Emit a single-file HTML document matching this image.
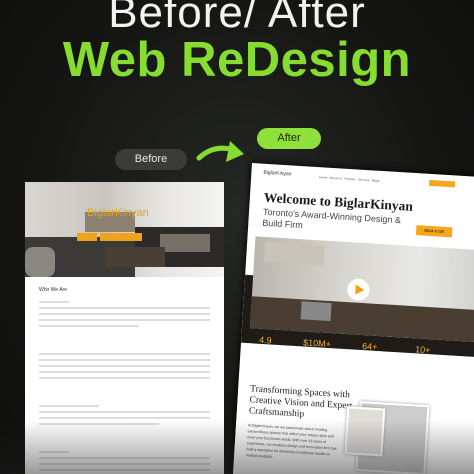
<!DOCTYPE html>
<html><head><style>
*{margin:0;padding:0;box-sizing:border-box}
html,body{width:474px;height:474px;overflow:hidden}
body{background:radial-gradient(ellipse at 50% 45%,#262824 0%,#151614 60%,#0e0e0d 100%);font-family:"Liberation Sans",sans-serif;position:relative}
.t1{position:absolute;top:-12px;left:0;width:474px;text-align:center;color:#f2f2f2;font-size:44px;font-weight:normal;letter-spacing:1px}
.t2{position:absolute;top:32px;left:0;width:474px;text-align:center;color:#86dc2f;font-size:49px;font-weight:bold;letter-spacing:0.5px}
.pill{position:absolute;border-radius:11px;font-size:11px;text-align:center;line-height:21px}
.before{left:115px;top:149px;width:72px;height:21px;background:#3b3c38;color:#e6e6e6}
.after{left:257px;top:128px;width:64px;height:21px;background:#8fe03b;color:#1a2a0a}
.bcard{position:absolute;left:25px;top:182px;width:199px;height:300px;background:#fff;overflow:hidden}
.bhero{height:95px;background:linear-gradient(90deg,#d8d6d0 0%,#c9c6bf 40%,#e7e6e2 70%,#f4f4f2 100%);position:relative}
.line{height:2px;background:#ddd;margin:4px 14px}
.acard{position:absolute;left:252px;top:163px;width:250px;height:330px;background:#fff;transform:rotate(3.5deg);transform-origin:0 0;box-shadow:0 0 8px #000;overflow:hidden}
.fade{position:absolute;left:0;top:420px;width:474px;height:54px;background:linear-gradient(rgba(20,20,20,0),rgba(30,30,30,.45))}
</style></head><body>
<div class="t1">Before/ After</div>
<div class="t2">Web ReDesign</div>
<div class="pill before">Before</div>
<div class="pill after">After</div>
<svg style="position:absolute;left:196px;top:138px" width="52" height="28" viewBox="0 0 52 28"><path d="M3 20 Q18 6 38 12" stroke="#86dc2f" stroke-width="5" fill="none" stroke-linecap="round"/><path d="M34 3 L48 16 L30 24 Z" fill="#86dc2f"/></svg>

<div class="bcard">
 <div class="bhero">
  <div style="position:absolute;left:0;top:55px;width:110px;height:40px;background:#3c3a37"></div>
  <div style="position:absolute;left:110px;top:45px;width:90px;height:40px;background:#2b2a28"></div>
  <div style="position:absolute;left:135px;top:52px;width:50px;height:18px;background:#777068"></div>
  <div style="position:absolute;left:80px;top:65px;width:60px;height:20px;background:#4a3f35"></div>
  <div style="position:absolute;left:0;top:65px;width:30px;height:30px;background:#8a8780;border-radius:8px"></div>
  <div style="position:absolute;left:60px;top:30px;width:50px;height:20px;background:#8c8171"></div>
  <div style="position:absolute;left:62px;top:25px;color:#e0a322;font-size:11px">BiglarKinyan</div>
  <div style="position:absolute;left:52px;top:51px;width:20px;height:8px;background:#f0a21a"></div>
  <div style="position:absolute;left:75px;top:51px;width:42px;height:8px;background:#f0a21a"></div>
 </div>
 <div style="padding:10px 0 0 0">
  <div style="font-size:5px;color:#333;margin:0 14px 8px">Who We Are</div>
  <div class="line" style="width:30px"></div><div class="line"></div><div class="line"></div><div class="line"></div><div class="line" style="width:100px"></div><br>
  <div class="line"></div><div class="line"></div><div class="line"></div><div class="line"></div><div class="line"></div><br>
  <div class="line" style="width:60px"></div><div class="line"></div><div class="line"></div><div class="line" style="width:120px"></div><br>
  <div class="line" style="width:30px"></div><div class="line"></div><div class="line"></div><div class="line"></div><div class="line"></div>
 </div>
</div>

<div class="acard">
 <div style="height:20px;position:relative;font-size:3px;color:#555">
  <div style="position:absolute;left:12px;top:6px;font-size:5px;color:#333">BiglarKinyan</div>
  <div style="position:absolute;left:68px;top:8px">Home &nbsp; About Us &nbsp; Portfolio &nbsp; Services &nbsp; Blogs</div>
  <div style="position:absolute;left:178px;top:6px;width:26px;height:6px;background:#f5a81c"></div>
 </div>
 <div style="padding:6px 14px 0;font-family:'Liberation Serif',serif;font-size:13.5px;font-weight:bold;color:#1a1a1a">Welcome to BiglarKinyan</div>
 <div style="padding:1px 14px;font-size:9px;color:#444;line-height:11px">Toronto's Award-Winning Design &amp;<br>Build Firm</div>
 <div style="position:absolute;left:168px;top:52px;width:36px;height:10px;background:#f5a81c;font-size:4px;line-height:10px;text-align:center">Book a call</div>
 <div style="position:absolute;left:0;top:112px;width:250px;height:68px;background:#1f1b16"></div>
 <div style="position:relative;margin:7px 8px 0;height:92px;background:linear-gradient(90deg,#b9b6ae,#d8d6d0 40%,#e8e8e6 70%,#d0d0cc);overflow:hidden">
  <div style="position:absolute;left:0;top:60px;width:232px;height:32px;background:#4a3d31"></div>
  <div style="position:absolute;left:50px;top:62px;width:30px;height:18px;background:#888"></div>
  <div style="position:absolute;left:10px;top:5px;width:60px;height:20px;background:#c9c4b9"></div>
  <div style="position:absolute;left:95px;top:36px;width:22px;height:22px;border-radius:50%;background:#fff"></div>
  <div style="position:absolute;left:103px;top:42px;width:0;height:0;border-left:9px solid #f0a21a;border-top:5px solid transparent;border-bottom:5px solid transparent"></div>
 </div>
 <div style="position:relative;height:40px;color:#fff;font-size:6px">
  <div style="position:absolute;left:14px;top:6px;text-align:center"><span style="color:#f5b13b;font-size:9px">4.9</span><br>Ratings</div>
  <div style="position:absolute;left:62px;top:6px;text-align:center"><span style="color:#f5b13b;font-size:9px">$10M+</span><br>Earned</div>
  <div style="position:absolute;left:118px;top:6px;text-align:center"><span style="color:#f5b13b;font-size:9px">64+</span><br>Projects</div>
  <div style="position:absolute;left:172px;top:6px;text-align:center"><span style="color:#f5b13b;font-size:9px">10+</span><br>Awards</div>
 </div>
 <div style="position:relative;height:140px;background:#fff">
  <div style="position:absolute;left:12px;top:16px;font-family:'Liberation Serif',serif;font-size:9.5px;color:#222;line-height:11px">Transforming Spaces with<br>Creative Vision and Expert<br>Craftsmanship</div>
  <div style="position:absolute;left:12px;top:54px;font-size:3.6px;color:#444;line-height:6px;width:90px">At BiglarKinyan, we are passionate about creating extraordinary spaces that reflect your unique style and meet your functional needs. With over 18 years of experience, our boutique design and renovation firm has built a reputation for delivering exceptional results on realistic budgets.</div>
  <div style="position:absolute;left:122px;top:26px;width:70px;height:70px;background:#ccc;border:2px solid #fff;box-shadow:0 0 3px #999"></div>
  <div style="position:absolute;left:110px;top:32px;width:38px;height:48px;background:#e0ded9;border:2px solid #fff;box-shadow:0 0 3px #999"></div>
 </div>
</div>
<div class="fade"></div>
</body></html>
